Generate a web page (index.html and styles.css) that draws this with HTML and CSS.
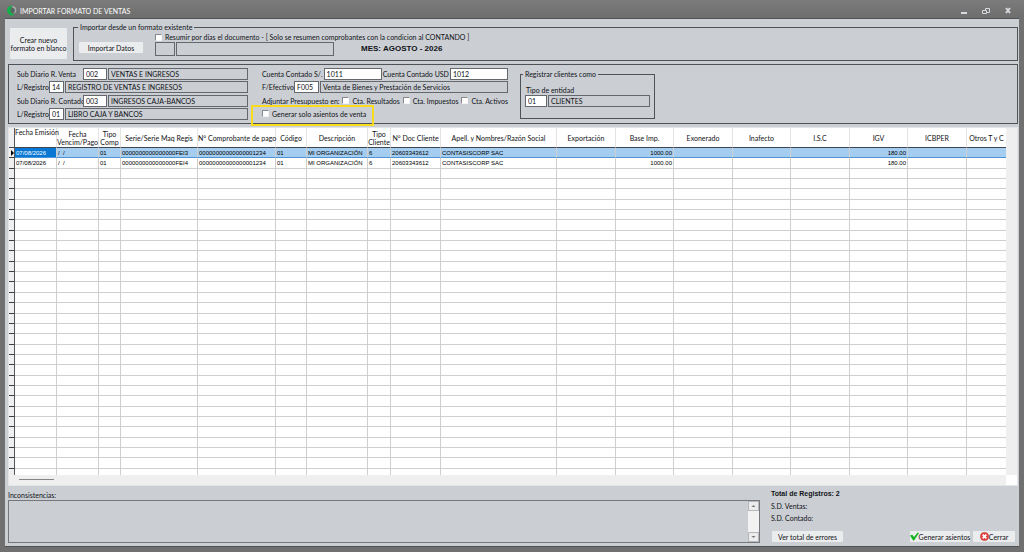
FILE: index.html
```html
<!DOCTYPE html>
<html lang="es">

<head>
  <meta charset="UTF-8">
  <meta name="viewport" content="width=device-width, initial-scale=1.0">
  <title>IMPORTAR FORMATO DE VENTAS</title>
  <link rel="stylesheet" href="styles.css">
</head>

<body>
  <header class="titlebar">
    <svg class="logo" viewBox="0 0 20 20">
      <path d="M10 2 Q19 2 19 10 Q18 16 13 15 Q17 9 10 2Z" fill="#a4aaaa" />
      <circle cx="11" cy="10" r="5" fill="#5c6462" />
      <path d="M12 1 A9 9 0 1 0 15 18 L10 14 Q5 9 12 1Z" fill="#12b04b" />
    </svg>
    <h1>IMPORTAR FORMATO DE VENTAS</h1>
    <div class="window-buttons">
      <button aria-label="Minimizar"><svg viewBox="0 0 8 8"><path d="M1 6H7" stroke-width="2" /></svg></button>
      <button aria-label="Restaurar"><svg viewBox="0 0 8 8"><path d="M3.500 3V1.500H7.500V5.500H5M.5 3.500H4.500V6.500H.5Z" /></svg></button>
      <button aria-label="Cerrar ventana"><svg viewBox="0 0 8 8"><path d="M2 1L6 6M6 1L2 6" stroke-width="2" /></svg></button>
    </div>
  </header>

  <main>
    <!-- Importar -->
    <section class="import-row">
      <button class="btn btn-new">Crear nuevo<br>formato en blanco</button>
      <fieldset class="import-box">
        <legend>Importar desde un formato existente</legend>
        <div class="import-content">
          <button class="btn btn-import">Importar Datos</button>
          <div class="import-options">
            <label class="check"><input type="checkbox">Resumir por días el documento - [ Solo se resumen comprobantes con la condicion al CONTANDO ]</label>
            <div class="import-fields">
              <input class="code" type="text" aria-label="Código" readonly>
              <input class="name" type="text" aria-label="Nombre" readonly>
              <strong class="month">MES: AGOSTO - 2026</strong>
            </div>
          </div>
        </div>
      </fieldset>
    </section>

    <!-- Parametros -->
    <section class="params">
      <div class="params-left">
        <div class="row">
          <label class="long" for="diario-venta">Sub Diario R. Venta</label>
          <input class="w24" id="diario-venta" type="text" value="002">
          <input class="grow" type="text" aria-label="Diario de venta" value="VENTAS E INGRESOS" readonly>
        </div>
        <div class="row">
          <label class="short" for="registro-venta">L/Registro</label>
          <input class="w15" id="registro-venta" type="text" value="14">
          <input class="grow" type="text" aria-label="Registro de venta" value="REGISTRO DE VENTAS E INGRESOS" readonly>
        </div>
        <div class="row">
          <label class="long" for="diario-contado">Sub Diario R. Contado</label>
          <input class="w24" id="diario-contado" type="text" value="003">
          <input class="grow" type="text" aria-label="Diario de contado" value="INGRESOS CAJA-BANCOS" readonly>
        </div>
        <div class="row">
          <label class="short" for="registro-contado">L/Registro</label>
          <input class="w15" id="registro-contado" type="text" value="01">
          <input class="grow" type="text" aria-label="Registro de contado" value="LIBRO CAJA Y BANCOS" readonly>
        </div>
      </div>

      <div class="params-center">
        <div class="row spread">
          <label for="contado-soles">Cuenta Contado S/.</label>
          <input class="w59" id="contado-soles" type="text" value="1011">
          <label for="contado-usd">Cuenta Contado USD</label>
          <input class="w59" id="contado-usd" type="text" value="1012">
        </div>
        <div class="row">
          <label class="short" for="efectivo">F/Efectivo</label>
          <input class="w25" id="efectivo" type="text" value="F005">
          <input class="grow" type="text" aria-label="Flujo de efectivo" value="Venta de Bienes y Prestación de Servicios" readonly>
        </div>
        <div class="row spread">
          <span>Adjuntar Presupuesto en:</span>
          <label class="check"><input type="checkbox">Cta. Resultados</label>
          <label class="check"><input type="checkbox">Cta. Impuestos</label>
          <label class="check"><input type="checkbox">Cta. Activos</label>
        </div>
        <div class="row highlighted">
          <label class="check"><input type="checkbox">Generar solo asientos de venta</label>
        </div>
      </div>

      <fieldset class="entity">
        <legend>Registrar clientes como</legend>
        <label for="entidad">Tipo de entidad</label>
        <div class="row">
          <input class="w22" id="entidad" type="text" value="01">
          <input class="grow" type="text" aria-label="Entidad" value="CLIENTES" readonly>
        </div>
      </fieldset>
    </section>

    <!-- Tabla -->
    <section class="grid">
      <div class="grid-body">
        <table>
          <colgroup>
            <col class="c6"><col class="c42"><col class="c42"><col class="c22"><col class="c77"><col class="c78">
            <col class="c31"><col class="c61"><col class="c23"><col class="c50"><col class="c116"><col class="c59">
            <col class="c58"><col class="c59"><col class="c58"><col class="c59"><col class="c58"><col class="c59"><col class="c40">
          </colgroup>
          <thead>
            <tr>
              <th></th>
              <th class="top">Fecha Emisión</th>
              <th>Fecha<br>Vencim/Pago</th>
              <th>Tipo<br>Comp</th>
              <th>Serie/Serie Maq Regis</th>
              <th>N° Comprobante de pago</th>
              <th>Código</th>
              <th>Descripción</th>
              <th>Tipo<br>Cliente</th>
              <th>N° Doc Cliente</th>
              <th>Apell. y Nombres/Razón Social</th>
              <th>Exportación</th>
              <th>Base Imp.</th>
              <th>Exonerado</th>
              <th>Inafecto</th>
              <th>I.S.C</th>
              <th>IGV</th>
              <th>ICBPER</th>
              <th>Otros T y C</th>
            </tr>
          </thead>
          <tbody id="rows">
            <tr class="selected">
              <td><i class="pointer"></i></td>
              <td class="active">07/08/2026</td>
              <td>/&nbsp; /</td>
              <td>01</td>
              <td>0000000000000000FEI3</td>
              <td>00000000000000001234</td>
              <td>01</td>
              <td>MI ORGANIZACIÓN</td>
              <td>6</td>
              <td>20603343612</td>
              <td>CONTASISCORP SAC</td>
              <td></td>
              <td class="num">1000.00</td>
              <td></td>
              <td></td>
              <td></td>
              <td class="num">180.00</td>
              <td></td>
              <td></td>
            </tr>
            <tr>
              <td></td>
              <td>07/08/2026</td>
              <td>/&nbsp; /</td>
              <td>01</td>
              <td>0000000000000000FEI4</td>
              <td>00000000000000001234</td>
              <td>01</td>
              <td>MI ORGANIZACIÓN</td>
              <td>6</td>
              <td>20603343612</td>
              <td>CONTASISCORP SAC</td>
              <td></td>
              <td class="num">1000.00</td>
              <td></td>
              <td></td>
              <td></td>
              <td class="num">180.00</td>
              <td></td>
              <td></td>
            </tr>
          </tbody>
        </table>
      </div>
      <div class="vscroll"></div>
      <div class="hscroll"><div class="thumb"></div></div>
    </section>

    <!-- Pie -->
    <footer>
      <div class="issues">
        <label for="inconsistencias">Inconsistencias:</label>
        <div class="issues-box">
          <textarea id="inconsistencias" readonly></textarea>
          <div class="scrollbar">
            <button aria-label="Subir"><svg viewBox="0 0 8 8"><path d="M2 5L4 3L6 5Z" /></svg></button>
            <button aria-label="Bajar"><svg viewBox="0 0 8 8"><path d="M2 3L4 5L6 3Z" /></svg></button>
          </div>
        </div>
      </div>
      <div class="summary">
        <strong>Total de Registros: 2</strong>
        <span>S.D. Ventas:</span>
        <span>S.D. Contado:</span>
        <div class="actions">
          <button class="btn btn-errors">Ver total de errores</button>
          <button class="btn btn-generate">
            <svg viewBox="0 0 20 20"><path d="M0 8L5 6L9 11L17 1L20 2L9 19L7 19Z" fill="#14b51e" /></svg>Generar asientos
          </button>
          <button class="btn btn-close">
            <svg viewBox="0 0 20 20">
              <circle cx="10" cy="10" r="9" fill="#e2403c" stroke="#b81f20" />
              <path d="M6 6L14 14M14 6L6 14" stroke="#fff" stroke-width="4" />
            </svg>Cerrar
          </button>
        </div>
      </div>
    </footer>
  </main>

  <script>
    // filas vacias de la tabla
    const rows = document.getElementById("rows");
    for (let i = 0; i < 30; i++) {
      const tr = rows.insertRow();
      for (let j = 0; j < 19; j++) {
        tr.insertCell();
      }
    }
    rows.lastElementChild.className = "cut";
  </script>
</body>

</html>
```

FILE: styles.css
```css
* {
  box-sizing: border-box;
}

body {
  display: flex;
  flex-direction: column;
  height: 100vh;
  margin: 0;
  padding: 0 5px 5px;
  background-color: #707070;
  font-family: Lato, "Liberation Sans", sans-serif;
  font-size: 7px;
  line-height: 8px;
  color: #101216;
}

button,
input,
textarea {
  margin: 0;
  font: inherit;
  color: inherit;
}

/* Barra de titulo */
.titlebar {
  display: flex;
  align-items: center;
  height: 18px;
  margin: 0 -5px;
  padding: 3px 12px 0 6px;
  background: linear-gradient(#7b7b7b, #6e6e6e);
}

.logo {
  width: 11px;
  height: 11px;
}

.titlebar h1 {
  flex: 1;
  margin: 0 0 0 3px;
  font-size: 7px;
  font-weight: normal;
  line-height: 12px;
  color: #fff;
}

.window-buttons {
  display: flex;
  gap: 14px;
}

.window-buttons button {
  display: flex;
  padding: 0;
  border: 0;
  background: none;
}

.window-buttons svg {
  width: 8px;
  height: 8px;
  fill: none;
  stroke: #d6dade;
}

main {
  flex: 1;
  display: flex;
  flex-direction: column;
  min-height: 0;
  padding: 4px 1px 3px 3px;
  border: 1px solid #505256;
  border-width: 1px 0;
  background-color: #cbcfd4;
}

.btn {
  display: flex;
  align-items: center;
  justify-content: center;
  padding: 0;
  border: 0;
  border-radius: 1px;
  background-color: #ebecee;
  white-space: nowrap;
}

fieldset {
  min-width: 0;
  margin: 0;
  padding: 0;
  border: 1px solid #4f5257;
}

legend {
  margin-left: 4px;
  padding: 0 2px;
}

input[type="text"] {
  height: 12px;
  min-width: 0;
  padding: 0 2px;
  border: 1px solid #64676c;
  border-radius: 0;
  background-color: #fff;
}

input[type="text"]:read-only {
  background-color: #cbcfd4;
}

input[type="checkbox"] {
  appearance: none;
  width: 7px;
  height: 7px;
  border: 1px solid #85888d;
  border-color: #85888d #f4f4f4 #f4f4f4 #85888d;
  background-color: #fff;
}

.check {
  display: flex;
  align-items: center;
  gap: 3px;
  white-space: nowrap;
}

/* Importar */
.import-row {
  display: flex;
  align-items: flex-end;
  gap: 6px;
  height: 38px;
}

.btn-new {
  width: 57px;
  height: 31px;
  margin: 0 0 2px 2px;
}

.import-box {
  flex: 1;
  height: 38px;
}

.import-content {
  display: flex;
  gap: 12px;
  padding: 2px 5px 0;
}

.btn-import {
  width: 64px;
  height: 11px;
  margin-top: 9px;
}

.import-options {
  flex: 1;
}

.import-fields {
  display: flex;
  gap: 1px;
  margin-top: 1px;
}

.import-fields input[type="text"] {
  height: 14px;
}

.import-fields .code {
  width: 20px;
}

.import-fields .name {
  width: 158px;
}

.month {
  margin-left: 26px;
  font-family: "Liberation Sans", sans-serif;
  font-size: 8px;
  line-height: 14px;
}

/* Parametros */
.params {
  display: flex;
  height: 60px;
  margin-top: 3px;
  padding: 3px 8px;
  border: 1px solid #4f5257;
}

.params-left,
.params-center {
  display: flex;
  flex-direction: column;
  justify-content: space-between;
}

.params-left {
  width: 231px;
}

.params-center {
  width: 246px;
  margin-left: 14px;
}

.row {
  display: flex;
  align-items: center;
  gap: 1px;
  height: 12px;
  white-space: nowrap;
}

.spread {
  justify-content: space-between;
}

.long {
  width: 65px;
}

.short {
  width: 31px;
}

.grow {
  flex: 1;
}

.w15 {
  width: 15px;
}

.w22 {
  width: 22px;
}

.w24 {
  width: 24px;
}

.w25 {
  width: 25px;
}

.w59 {
  width: 59px;
}

.highlighted {
  position: relative;
}

/* recuadro sobre la opcion */
.highlighted::after {
  content: "";
  position: absolute;
  top: -3px;
  left: -11px;
  box-sizing: border-box;
  width: 123px;
  height: 21px;
  border: 2px solid #fadc1e;
  pointer-events: none;
}

.entity {
  width: 135px;
  height: 49px;
  margin: 2px 0 0 12px;
  padding: 0 4px;
}

.entity legend {
  margin-left: -2px;
}

.entity label {
  display: block;
  margin: 8px 0 1px 1px;
}

/* Tabla */
.grid {
  flex: 1;
  display: grid;
  grid-template-columns: 1fr 11px;
  grid-template-rows: 1fr 10px;
  min-height: 0;
  margin-top: 3px;
  border: 1px solid #e2e4e6;
  background-color: #fff;
}

.grid-body {
  min-height: 0;
  overflow: hidden;
}

table {
  width: 100%;
  height: 100%;
  table-layout: fixed;
  border-collapse: separate;
  border-spacing: 0;
}

.c6 { width: 6px; }
.c22 { width: 22px; }
.c23 { width: 23px; }
.c31 { width: 31px; }
.c40 { width: 40px; }
.c42 { width: 42px; }
.c50 { width: 50px; }
.c58 { width: 58px; }
.c59 { width: 59px; }
.c61 { width: 61px; }
.c77 { width: 77px; }
.c78 { width: 78px; }
.c116 { width: 116px; }

th {
  height: 20px;
  padding: 0;
  border-right: 1px solid #e4e4e4;
  border-bottom: 1px solid #3f4650;
  font-weight: normal;
  white-space: nowrap;
}

.top {
  vertical-align: top;
}

tbody tr {
  height: 10px;
}

td {
  padding: 0 1px;
  border-right: 1px solid #cfcfcf;
  border-bottom: 1px solid #cfcfcf;
  font-family: "Liberation Sans", sans-serif;
  font-size: 6px;
  color: #000;
  white-space: nowrap;
  overflow: hidden;
}

td:first-child {
  padding: 0;
  border-right-color: #55585c;
  border-bottom-color: #3c3e42;
  background-color: #efefef;
}

th:first-child {
  border-right-color: #55585c;
  background-color: #efefef;
}

.selected td:not(:first-child) {
  border-bottom-color: #4b94d6;
  background-color: #a4cdf0;
}

.selected .active:not(:first-child) {
  background-color: #0878d4;
  color: #fff;
}

.num {
  text-align: right;
}

tbody .cut {
  height: 6px;
}

.cut td {
  border-bottom: 0;
}

.pointer {
  display: block;
  width: 0;
  margin-left: 2px;
  border: 3px solid transparent;
  border-right: 0;
  border-left-color: #000;
}

.vscroll {
  background-color: #efefef;
}

.hscroll {
  padding: 4px 10px;
  background-color: #efefef;
}

.thumb {
  width: 35px;
  height: 1px;
  background-color: #858585;
}

/* Pie */
footer {
  display: flex;
  gap: 11px;
  height: 57px;
}

.issues {
  flex: 1;
  display: flex;
  flex-direction: column;
  padding-top: 5px;
}

.issues-box {
  flex: 1;
  display: flex;
  margin-top: 1px;
  border: 1px solid #74777b;
}

.issues textarea {
  flex: 1;
  padding: 2px;
  border: 0;
  resize: none;
  background-color: #cbcfd4;
}

.scrollbar {
  display: flex;
  flex-direction: column;
  justify-content: space-between;
  width: 11px;
  background-color: #f2f2f2;
}

.scrollbar button {
  display: flex;
  padding: 0;
  border: 1px solid #b5b7ba;
  background-color: #ececec;
}

.scrollbar svg {
  width: 9px;
  height: 8px;
  fill: #77797d;
}

.summary {
  display: flex;
  flex-direction: column;
  gap: 4px;
  width: 247px;
  padding-top: 4px;
}

.summary strong {
  font-family: "Liberation Sans", sans-serif;
}

.actions {
  display: flex;
  align-items: center;
  margin-top: 5px;
  padding-right: 3px;
}

.actions .btn {
  height: 11px;
}

.actions svg {
  flex-shrink: 0;
  width: 9px;
  height: 9px;
}

.btn-errors {
  width: 71px;
  margin: 0 auto 0 1px;
}

.btn-generate {
  width: 60px;
}

.btn-close {
  width: 42px;
  margin-left: 3px;
}
```
